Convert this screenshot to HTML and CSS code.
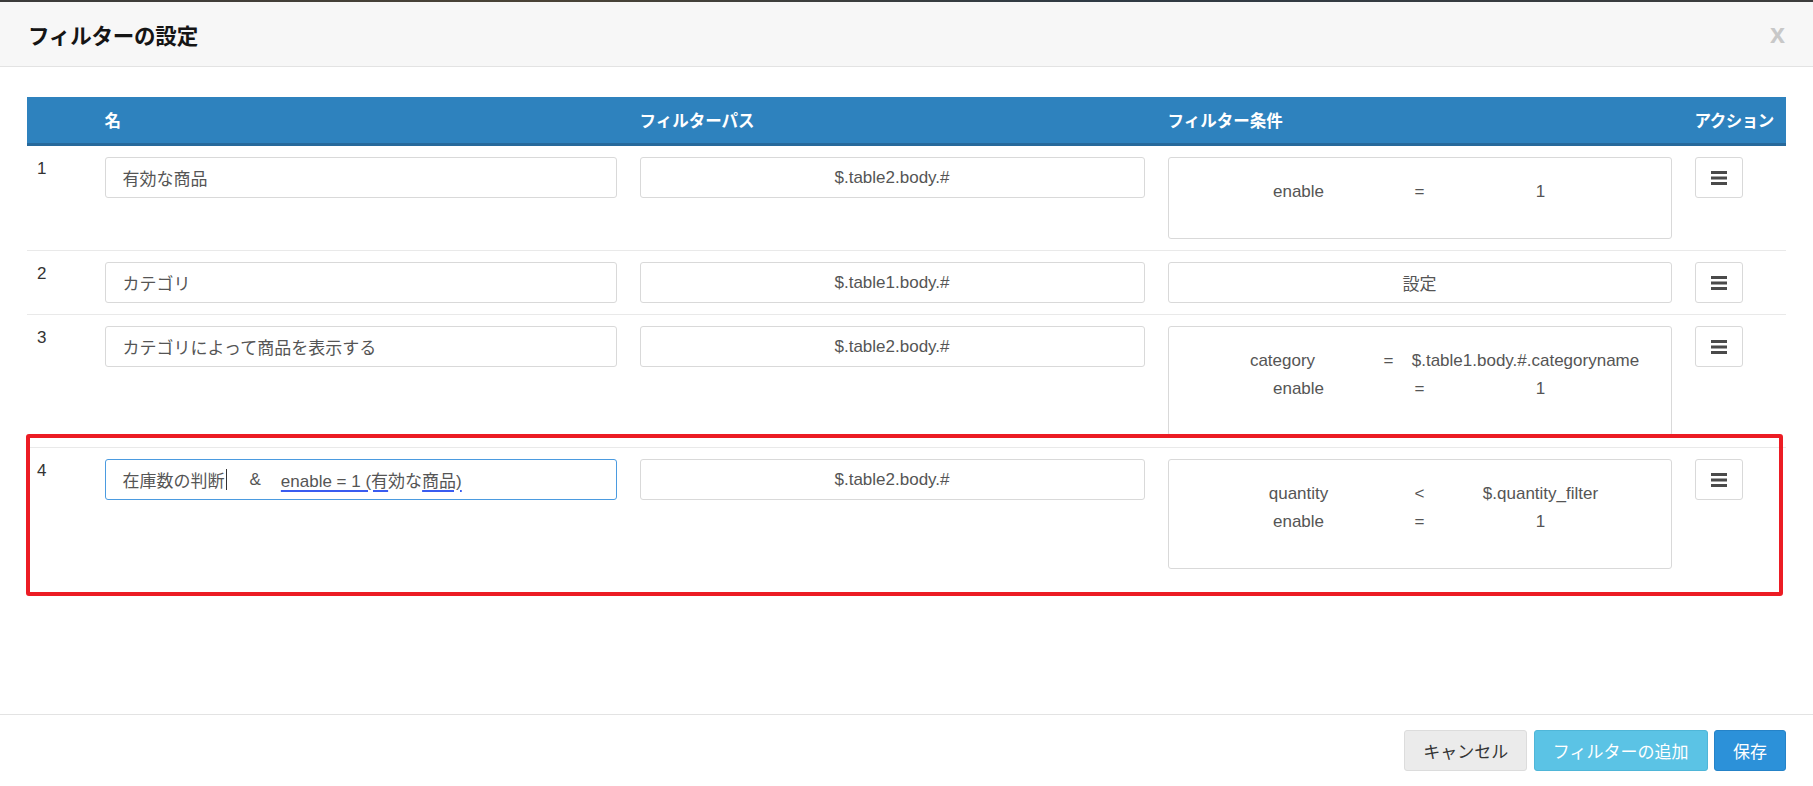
FILE: index.html
```html
<!DOCTYPE html>
<html lang="ja">
<head>
<meta charset="utf-8">
<title>フィルターの設定</title>
<link rel="stylesheet" href="styles.css">
</head>
<body>
<div class="strip"></div>
<div class="modal">
  <header class="modal-header">
    <h4 class="modal-title">フィルターの設定</h4>
    <span class="close">x</span>
  </header>
  <main class="modal-body">
    <div class="ftable">
      <div class="frow head">
        <div class="cell num"></div>
        <div class="cell">名</div>
        <div class="cell">フィルターパス</div>
        <div class="cell">フィルター条件</div>
        <div class="cell">アクション</div>
      </div>

      <div class="frow">
        <div class="cell num">1</div>
        <div class="cell"><div class="field">有効な商品</div></div>
        <div class="cell"><div class="field center">$.table2.body.#</div></div>
        <div class="cell">
          <div class="cond">
            <div class="cline"><span>enable</span><span>=</span><span>1</span></div>
          </div>
        </div>
        <div class="cell"><button class="menu-btn"><svg width="16" height="14" viewBox="0 0 16 14"><rect x="0" y="0" width="16" height="3" fill="#4a4a4a"/><rect x="0" y="5.5" width="16" height="3" fill="#4a4a4a"/><rect x="0" y="11" width="16" height="3" fill="#4a4a4a"/></svg></button></div>
      </div>

      <div class="frow">
        <div class="cell num">2</div>
        <div class="cell"><div class="field">カテゴリ</div></div>
        <div class="cell"><div class="field center">$.table1.body.#</div></div>
        <div class="cell"><div class="field center">設定</div></div>
        <div class="cell"><button class="menu-btn"><svg width="16" height="14" viewBox="0 0 16 14"><rect x="0" y="0" width="16" height="3" fill="#4a4a4a"/><rect x="0" y="5.5" width="16" height="3" fill="#4a4a4a"/><rect x="0" y="11" width="16" height="3" fill="#4a4a4a"/></svg></button></div>
      </div>

      <div class="frow">
        <div class="cell num">3</div>
        <div class="cell"><div class="field">カテゴリによって商品を表示する</div></div>
        <div class="cell"><div class="field center">$.table2.body.#</div></div>
        <div class="cell">
          <div class="cond">
            <div class="cline wide"><span>category</span><span>=</span><span>$.table1.body.#.categoryname</span></div>
            <div class="cline"><span>enable</span><span>=</span><span>1</span></div>
          </div>
        </div>
        <div class="cell"><button class="menu-btn"><svg width="16" height="14" viewBox="0 0 16 14"><rect x="0" y="0" width="16" height="3" fill="#4a4a4a"/><rect x="0" y="5.5" width="16" height="3" fill="#4a4a4a"/><rect x="0" y="11" width="16" height="3" fill="#4a4a4a"/></svg></button></div>
      </div>

      <div class="frow marked">
        <div class="cell num">4</div>
        <div class="cell">
          <div class="field focus">在庫数の判断<span class="caret"></span><span class="amp">&amp;</span><span class="ime">enable = 1 (有</span>効な<span class="ime">商品)</span></div>
        </div>
        <div class="cell"><div class="field center">$.table2.body.#</div></div>
        <div class="cell">
          <div class="cond">
            <div class="cline"><span>quantity</span><span>&lt;</span><span>$.quantity_filter</span></div>
            <div class="cline"><span>enable</span><span>=</span><span>1</span></div>
          </div>
        </div>
        <div class="cell"><button class="menu-btn"><svg width="16" height="14" viewBox="0 0 16 14"><rect x="0" y="0" width="16" height="3" fill="#4a4a4a"/><rect x="0" y="5.5" width="16" height="3" fill="#4a4a4a"/><rect x="0" y="11" width="16" height="3" fill="#4a4a4a"/></svg></button></div>
        <div class="highlight"></div>
      </div>
    </div>
  </main>
  <footer class="modal-footer">
    <button class="btn btn-default">キャンセル</button>
    <button class="btn btn-info">フィルターの追加</button>
    <button class="btn btn-primary">保存</button>
  </footer>
</div>
</body>
</html>
```

FILE: styles.css
```css
* { box-sizing: border-box; }

html, body {
  margin: 0;
  padding: 0;
  height: 786px;
  overflow: hidden;
}

body {
  font-family: "Liberation Sans", "Noto Sans CJK JP", sans-serif;
  font-size: 17px;
  color: #555;
  background: #fff;
}

.strip {
  height: 2px;
  background: linear-gradient(90deg, #3b3b3b, #4a4336 30%, #2f3a44 60%, #3d3d3d);
}

.modal {
  height: 784px;
  display: flex;
  flex-direction: column;
  background: #fff;
}

.modal-header {
  height: 65px;
  background: #f7f7f7;
  border-bottom: 1px solid #e3e3e3;
  display: flex;
  align-items: center;
  justify-content: space-between;
  padding: 0 28px 0 28px;
}

.modal-title {
  margin: 0;
  font-size: 21.5px;
  font-weight: bold;
  color: #151515;
  font-family: "Noto Sans CJK JP", "Liberation Sans", sans-serif;
  letter-spacing: -0.2px;
}

.close {
  font-family: "Liberation Sans", sans-serif;
  font-size: 27px;
  font-weight: bold;
  color: #c8c8c8;
  line-height: 1;
  margin-top: 0;
}

.modal-body {
  flex: 1;
  padding: 30px 27px 0 27px;
}

.ftable {
  width: 1759px;
}

.frow {
  display: grid;
  grid-template-columns: 66px 535px 528px 527px 103px;
  border-top: 1px solid #e9e9e9;
  padding: 11px 0 11px;
  position: relative;
}

.frow.head {
  border-top: none;
  height: 49px;
  padding: 0;
  background: #2e82be;
  border-bottom: 3px solid #27699b;
  align-items: center;
  color: #fff;
  font-weight: bold;
  font-family: "Noto Sans CJK JP", "Liberation Sans", sans-serif;
  font-size: 16.5px;
  white-space: nowrap;
}

.frow.head + .frow {
  border-top: none;
}

.cell {
  padding: 0 11.5px;
  min-width: 0;
}

.frow.head .cell:last-child {
  letter-spacing: -0.5px;
  padding-right: 0;
}

.cell.num {
  padding-left: 10px;
  color: #333;
  line-height: 24px;
}

.field {
  height: 41px;
  border: 1px solid #d9d9d9;
  border-radius: 3px;
  background: #fff;
  display: flex;
  align-items: center;
  padding: 0 17px;
  color: #555;
  white-space: nowrap;
  font-family: "Liberation Sans", "Noto Sans CJK JP", sans-serif;
}

.field.center {
  justify-content: center;
}

.field.focus {
  border-color: #4b9be0;
}

.caret {
  display: inline-block;
  width: 1px;
  height: 21px;
  background: #333;
  margin-left: 1px;
}

.amp {
  margin: 0 20px 0 23px;
}

.ime {
  text-decoration: underline;
  text-decoration-color: #3a5cf0;
  text-decoration-thickness: 2px;
  text-underline-offset: 3px;
}

.cond {
  border: 1px solid #d9d9d9;
  border-radius: 3px;
  padding: 20px 0 32px;
  background: #fff;
}

.cline {
  display: grid;
  grid-template-columns: 202px 40px 202px;
  justify-content: center;
  line-height: 28px;
  text-align: center;
  white-space: nowrap;
}

.cline.wide {
  grid-template-columns: 172px 40px 234px;
}

.menu-btn {
  width: 48px;
  height: 41px;
  border: 1px solid #d9d9d9;
  border-radius: 3px;
  background: #fff;
  display: flex;
  align-items: center;
  justify-content: center;
  padding: 0;
  margin-top: 0;
}

.highlight {
  position: absolute;
  top: -14px;
  left: -1px;
  right: 3px;
  height: 162px;
  border: 4px solid #ec1c24;
  border-radius: 3px;
  pointer-events: none;
}

.modal-footer {
  border-top: 1px solid #e3e3e3;
  padding: 15px 27px 15px 27px;
  display: flex;
  justify-content: flex-end;
  gap: 6.5px;
}

.btn {
  height: 41px;
  border-radius: 3px;
  font-family: "Noto Sans CJK JP", "Liberation Sans", sans-serif;
  font-size: 17px;
  padding: 0 18px;
  border: 1px solid transparent;
  cursor: pointer;
}

.btn-default {
  background: #ebebeb;
  border-color: #dcdcdc;
  color: #333;
}

.btn-info {
  background: #5bc3e5;
  border-color: #4fb6d8;
  color: #fff;
}

.btn-primary {
  background: #2c91d9;
  border-color: #2583c8;
  color: #fff;
}
```
